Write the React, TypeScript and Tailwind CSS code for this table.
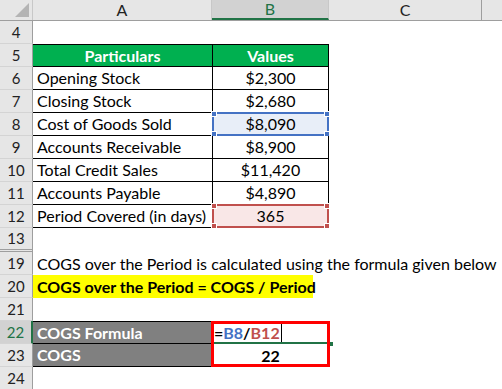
import React from "react";

const FONT = { fontFamily: "Lato, 'Open Sans', sans-serif" };

type Row = { n: string; h: number; kind: string; a?: string; b?: string };

const rows: Row[] = [
  { n: "4", h: 23, kind: "empty" },
  { n: "5", h: 23, kind: "head", a: "Particulars", b: "Values" },
  { n: "6", h: 23, kind: "data", a: "Opening Stock", b: "$2,300" },
  { n: "7", h: 23, kind: "data", a: "Closing Stock", b: "$2,680" },
  { n: "8", h: 23, kind: "blue", a: "Cost of Goods Sold", b: "$8,090" },
  { n: "9", h: 23, kind: "data", a: "Accounts Receivable", b: "$8,900" },
  { n: "10", h: 23, kind: "data", a: "Total Credit Sales", b: "$11,420" },
  { n: "11", h: 23, kind: "data", a: "Accounts Payable", b: "$4,890" },
  { n: "12", h: 23, kind: "red", a: "Period Covered (in days)", b: "365" },
  { n: "13", h: 24, kind: "hidden" },
  { n: "19", h: 23, kind: "text" },
  { n: "20", h: 23, kind: "yellow" },
  { n: "21", h: 23, kind: "empty" },
  { n: "22", h: 23, kind: "formula" },
  { n: "23", h: 23, kind: "result" },
  { n: "24", h: 23, kind: "empty" },
];

function Handles({ color }: { color: string }) {
  const sq = `absolute w-[6px] h-[6px] ${color} border border-white`;
  return (
    <>
      <span className={`${sq} -left-[3px] -top-[3px]`} />
      <span className={`${sq} -right-[3px] -top-[3px]`} />
      <span className={`${sq} -left-[3px] -bottom-[3px]`} />
      <span className={`${sq} -right-[3px] -bottom-[3px]`} />
    </>
  );
}

function RowHead({ n, h, active, hidden }: { n: string; h: number; active?: boolean; hidden?: boolean }) {
  return (
    <div
      className={`w-[33px] shrink-0 flex items-center justify-center text-[15px] border-b ${
        hidden ? "border-b-[3px] border-double border-[#9e9e9e]" : "border-[#d4d4d4]"
      } ${active ? "bg-[#d2d2d2] text-[#217346] border-r-2 border-r-[#217346]" : "bg-[#e6e6e6] text-[#222] border-r border-r-[#9e9e9e]"}`}
      style={{ height: h }}
    >
      {n}
    </div>
  );
}

function SheetRow({ r }: { r: Row }) {
  const tableRow = ["head", "data", "blue", "red"].includes(r.kind);
  return (
    <div className="flex" style={{ height: r.h }}>
      <RowHead n={r.n} h={r.h} active={r.kind === "formula"} hidden={r.kind === "hidden"} />
      {tableRow && (
        <>
          <div
            className={`w-[179px] shrink-0 flex items-center px-[4px] text-[16px] border-b border-black ${
              r.kind === "head" ? "bg-[#00b050] text-white font-bold justify-center border-t" : "text-black"
            }`}
          >
            {r.a}
          </div>
          <div
            className={`relative w-[117px] shrink-0 flex items-center justify-center text-[16px] border-b border-x border-black ${
              r.kind === "head" ? "bg-[#00b050] text-white font-bold border-t" : ""
            } ${r.kind === "blue" ? "bg-[#e8eef8]" : ""} ${r.kind === "red" ? "bg-[#f9e7e7]" : ""}`}
          >
            {r.b}
            {r.kind === "blue" && (
              <div className="absolute -inset-[1px] border-2 border-[#4472c4]">
                <Handles color="bg-[#4472c4]" />
              </div>
            )}
            {r.kind === "red" && (
              <div className="absolute -inset-[1px] border-2 border-[#c0504d]">
                <Handles color="bg-[#c0504d]" />
              </div>
            )}
          </div>
        </>
      )}
      {r.kind === "text" && (
        <div className="flex items-center px-[4px] text-[16px] text-black whitespace-nowrap">
          COGS over the Period is calculated using the formula given below
        </div>
      )}
      {r.kind === "yellow" && (
        <div className="w-[280px] flex items-center px-[4px] text-[16px] font-bold text-black bg-[#ffff00] whitespace-nowrap">
          COGS over the Period = COGS / Period
        </div>
      )}
      {(r.kind === "formula" || r.kind === "result") && (
        <>
          <div
            className={`w-[179px] shrink-0 flex items-center px-[4px] text-[16px] font-bold text-white bg-[#808080] border-b border-black ${
              r.kind === "formula" ? "border-t" : ""
            }`}
          >
            {r.kind === "formula" ? "COGS Formula" : "COGS"}
          </div>
          <div className="relative w-[117px] shrink-0 flex items-center text-[16px] font-bold">
            {r.kind === "formula" ? (
              <div className="flex items-center pl-[2px]">
                <span className="text-black">=</span>
                <span className="text-[#4472c4]">B8</span>
                <span className="text-black">/</span>
                <span className="text-[#c0504d]">B12</span>
                <span className="ml-[1px] w-px h-[18px] bg-black" />
              </div>
            ) : (
              <div className="w-full text-center text-black">22</div>
            )}
            {r.kind === "formula" && (
              <>
                <div className="absolute left-0 -right-[2px] bottom-0 h-[2px] bg-[#217346]" />
                <div className="absolute -right-[4px] -bottom-[2px] w-[4px] h-[4px] bg-[#217346]" />
                <div className="absolute -left-[1px] -right-[1px] top-0 -bottom-[23px] border-[3px] border-[#ff0000]" />
              </>
            )}
          </div>
        </>
      )}
    </div>
  );
}

export default function App() {
  return (
    <div className="w-[502px] h-[389px] overflow-hidden bg-white" style={FONT}>
      <div className="flex h-[21px] bg-[#e6e6e6] border-b border-[#9e9e9e] text-[16px] text-[#222]">
        <div className="relative w-[33px] shrink-0 border-r border-[#c8c8c8]">
          <svg className="absolute right-[3px] bottom-[3px]" width="14" height="14" viewBox="0 0 14 14">
            <polygon points="14,0 14,14 0,14" fill="#b4b4b4" />
          </svg>
        </div>
        <div className="w-[179px] shrink-0 flex items-center justify-center border-r border-[#c8c8c8]">A</div>
        <div className="w-[117px] shrink-0 flex items-center justify-center bg-[#d2d2d2] text-[#217346] border-r border-[#c8c8c8] border-b-2 border-b-[#217346]">
          B
        </div>
        <div className="w-[153px] shrink-0 flex items-center justify-center border-r border-[#9e9e9e]">C</div>
        <div className="flex-1" />
      </div>
      {rows.map((r) => (
        <SheetRow key={r.n} r={r} />
      ))}
    </div>
  );
}
